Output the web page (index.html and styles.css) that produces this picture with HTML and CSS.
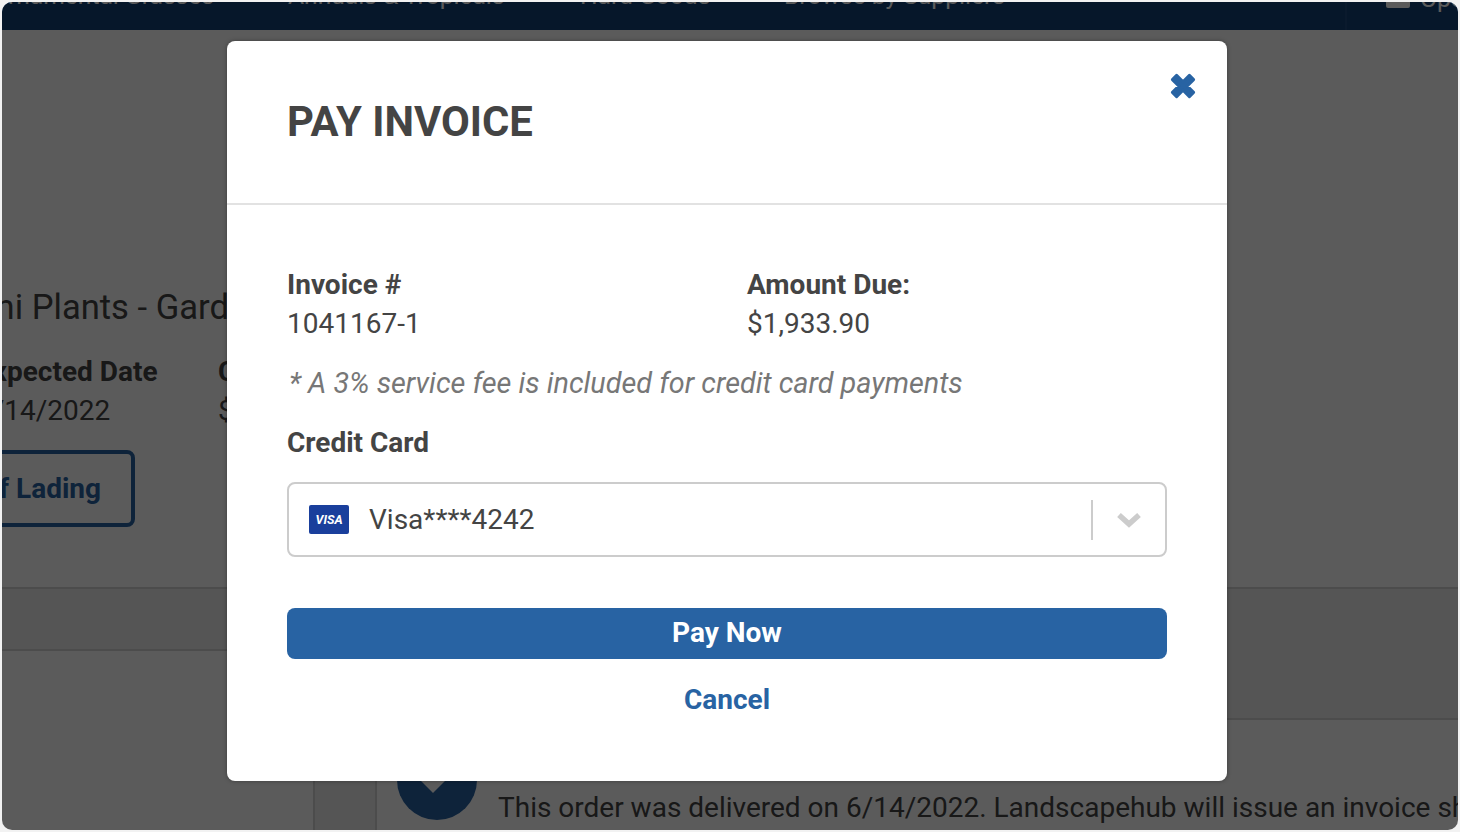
FILE: index.html
```html
<!DOCTYPE html>
<html lang="en">
<head>
<meta charset="utf-8">
<title>Pay Invoice</title>
<link rel="stylesheet" href="styles.css">
</head>
<body>
<div class="window">
  <div class="page">
    <nav class="topnav">
      <span class="nav-a">Ornamental Grasses</span>
      <span class="nav-b">Annuals &amp; Tropicals</span>
      <span class="nav-c">Hard Goods</span>
      <span class="nav-d">Browse by Suppliers</span>
      <span class="nav-side">
        <svg class="nav-icon" viewBox="0 0 24 24" aria-hidden="true"><path d="M2 0h20a2 2 0 0 1 2 2v18a2 2 0 0 1-2 2H2a2 2 0 0 1-2-2V2a2 2 0 0 1 2-2z"/></svg>
        <span>Open</span>
      </span>
    </nav>
    <section class="summary">
      <h2 class="supplier">Mini Plants - Garden</h2>
      <div class="facts">
        <div class="fact-date"><b>Expected Date</b><span>6/14/2022</span></div>
        <div><b>Cost</b><span>$1,933.90</span></div>
      </div>
      <a class="outline-btn">Bill of Lading</a>
    </section>
    <section class="lower">
      <div class="col-a"><div class="band-short"></div></div>
      <div class="col-b"></div>
      <div class="col-c">
        <div class="band-tall"></div>
        <div class="notice">
          <span class="notice-badge"><svg viewBox="0 0 80 80" aria-hidden="true"><path d="M22 29l14 14 24-24" /></svg></span>
          <p>This order was delivered on 6/14/2022. Landscapehub will issue an invoice shortly.</p>
        </div>
      </div>
    </section>
  </div>

  <div class="overlay">
    <div class="modal">
      <header class="modal-head">
        <h1>PAY INVOICE</h1>
        <svg class="close" viewBox="0 0 26 26" aria-hidden="true"><path d="M6.6 2.4L13 8.76 19.4 2.4 23.6 6.6 17.24 13 23.6 19.4 19.4 23.6 13 17.24 6.6 23.6 2.4 19.4 8.76 13 2.4 6.6z"/></svg>
      </header>
      <div class="modal-body">
        <div class="pair-row">
          <div class="pair"><b>Invoice #</b><span>1041167-1</span></div>
          <div class="pair"><b>Amount Due:</b><span>$1,933.90</span></div>
        </div>
        <p class="fee">* A 3% service fee is included for credit card payments</p>
        <label class="field-label">Credit Card</label>
        <div class="select">
          <span class="visa">VISA</span>
          <span class="select-value">Visa****4242</span>
          <span class="select-sep"></span>
          <svg class="chevron" viewBox="0 0 26 16" aria-hidden="true"><path d="M3 3l10 9 10-9"/></svg>
        </div>
        <button class="pay" type="button">Pay Now</button>
        <a class="cancel">Cancel</a>
      </div>
    </div>
  </div>
</div>
</body>
</html>
```

FILE: styles.css
```css
* { box-sizing: border-box; }
html, body { margin: 0; height: 100%; }
body {
  padding: 2px;
  background: #f2f2f2;
  font-family: Roboto, "Liberation Sans", sans-serif;
  color: #444;
  overflow: hidden;
}
.window {
  position: relative;
  width: 1456px;
  height: 828px;
  border-radius: 10px;
  overflow: hidden;
  background: #fff;
}
.page { height: 100%; overflow: hidden; }

.topnav {
  height: 28px;
  background: #114076;
  color: #fff;
  font-size: 24.6px;
  line-height: 28px;
  display: flex;
  align-items: flex-end;
  white-space: nowrap;
  overflow: hidden;
}
.topnav span { display: block; transform: translateY(-20px); }
.nav-a { width: 297px; margin-left: -11px; flex: none; }
.nav-b { width: 292px; flex: none; }
.nav-c { width: 204px; flex: none; }
.nav-d { width: 561px; flex: none; }
.topnav .nav-side {
  display: flex;
  align-items: center;
  gap: 10px;
  height: 28px;
  border-left: 2px solid #1d4a7e;
  padding-left: 39px;
  transform: none;
}
.topnav .nav-side span { transform: translateY(-17px); }
.nav-icon { width: 24px; height: 24px; fill: #fff; flex: none; transform: translateY(-18px); }

.summary { padding-top: 257px; margin-left: -25px; height: 557px; }
.supplier { margin: 0 0 0 -20px; font-size: 34.6px; line-height: 40px; font-weight: 400; white-space: nowrap; }
.facts { display: flex; margin-top: 25px; font-size: 28px; line-height: 39px; white-space: nowrap; }
.facts > div { display: flex; flex-direction: column; }
.fact-date { width: 241px; flex: none; }
.outline-btn {
  display: inline-flex;
  align-items: center;
  justify-content: flex-end;
  width: 158px;
  height: 77px;
  margin-top: 20px;
  padding-right: 30px;
  border: 4px solid #2863a3;
  border-radius: 8px;
  color: #2863a3;
  font-size: 28px;
  font-weight: 700;
  white-space: nowrap;
}

.lower { display: flex; height: 243px; border-top: 2px solid #d5d5d5; }
.col-a { width: 311px; flex: none; }
.band-short { height: 62px; background: #eee; border-bottom: 2px solid #d5d5d5; }
.col-b { width: 64px; flex: none; background: #eee; border-left: 2px solid #d5d5d5; border-right: 2px solid #d5d5d5; }
.col-c { flex: 1; min-width: 0; }
.band-tall { height: 131px; background: #eee; border-bottom: 2px solid #d5d5d5; }
.notice { display: flex; gap: 21px; padding: 20px 0 0 20px; white-space: nowrap; }
.notice p { margin: 52px 0 0; font-size: 28px; line-height: 32px; }
.notice-badge { width: 80px; height: 80px; border-radius: 50%; background: #2863a3; flex: none; }
.notice-badge svg { display: block; width: 80px; height: 80px; fill: none; stroke: #fff; stroke-width: 14; }

.overlay {
  position: absolute;
  inset: 0;
  background: rgba(0, 0, 0, .643);
  display: flex;
  justify-content: center;
  padding: 39px 6px 0 0;
}
.modal {
  width: 1000px;
  height: 740px;
  background: #fff;
  border-radius: 8px;
  box-shadow: 0 0 4px rgba(0, 0, 0, .35);
}
.modal-head {
  height: 164px;
  padding: 0 60px;
  display: flex;
  justify-content: space-between;
  align-items: flex-start;
  border-bottom: 2px solid #e2e2e2;
}
.modal-head h1 {
  margin: 55px 0 0;
  font-size: 41.8px;
  line-height: 52px;
  font-weight: 700;
  color: #444;
}
.close {
  width: 26px;
  height: 26px;
  margin: 32px -29px 0 0;
  fill: #2863a3;
  stroke: #2863a3;
  stroke-width: 3;
  stroke-linejoin: round;
}
.modal-body { padding: 60px 60px 0; }
.pair-row { display: flex; }
.pair { flex: none; width: 460px; display: flex; flex-direction: column; font-size: 28px; line-height: 39px; }
.fee { margin: 21px 0 0 2px; font-size: 28.8px; line-height: 39px; font-style: italic; color: #777; white-space: nowrap; }
.field-label { display: block; margin-top: 20px; font-size: 28px; line-height: 39px; font-weight: 700; }
.select {
  display: flex;
  align-items: center;
  height: 75px;
  margin-top: 20px;
  padding: 0 23px 0 20px;
  border: 2px solid #ccc;
  border-radius: 8px;
}
.visa {
  width: 40px;
  height: 29px;
  border-radius: 2px;
  background: #1a3f9c;
  color: #fff;
  font-size: 12.5px;
  line-height: 29px;
  font-weight: 700;
  font-style: italic;
  text-align: center;
  flex: none;
}
.select-value { flex: 1; margin-left: 20px; font-size: 28px; }
.select-sep { width: 2px; height: 40px; background: #ccc; }
.chevron {
  width: 26px;
  height: 16px;
  margin-left: 23px;
  fill: none;
  stroke: #ccc;
  stroke-width: 5.5;
}
.pay {
  display: block;
  width: 100%;
  height: 51px;
  margin-top: 51px;
  padding: 0 0 3px;
  border: 0;
  border-radius: 8px;
  background: #2863a3;
  color: #fff;
  font: 700 28px Roboto, "Liberation Sans", sans-serif;
}
.cancel {
  display: block;
  margin-top: 21px;
  text-align: center;
  color: #2863a3;
  font-size: 28px;
  line-height: 40px;
  font-weight: 700;
}
```
